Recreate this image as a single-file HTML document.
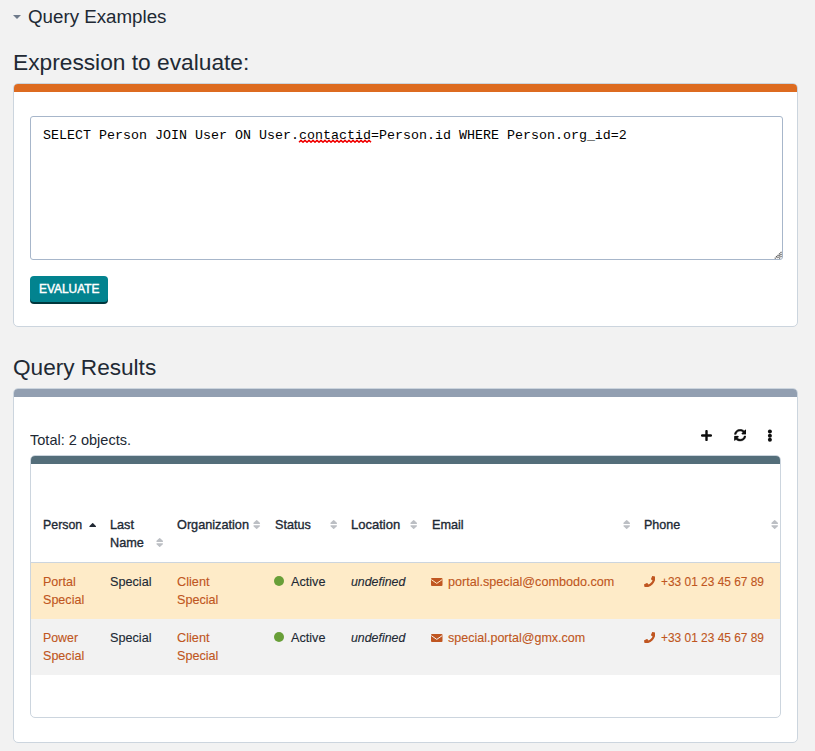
<!DOCTYPE html>
<html lang="en">
<head>
<meta charset="utf-8">
<title>Run Queries</title>
<style>
*{box-sizing:border-box;margin:0;padding:0}
html,body{width:815px;height:751px;overflow:hidden;background:#f2f2f2}
body{position:relative;font-family:"Liberation Sans",sans-serif;color:#212934;font-size:13px;line-height:18px}
.abs{position:absolute;white-space:nowrap}
.t{transform-origin:0 50%}
.caret{left:13px;top:15px;width:0;height:0;border-left:4px solid transparent;border-right:4px solid transparent;border-top:4px solid #6e7a8a}
.qe{font-size:18px;line-height:22px}
.h2{font-size:22.5px;line-height:28px}
.total{font-size:15px;line-height:20px}
.th{font-size:13px;line-height:18px;-webkit-text-stroke:0.35px #212934}
.td{font-size:13px;line-height:18px;-webkit-text-stroke:0.12px}
.it{font-style:italic}
.lnk{color:#c05621}
.panel{position:absolute;left:13px;width:785px;background:#fff;border:1px solid #ccd5de;border-radius:5px;overflow:hidden}
.panel .bar{position:absolute;left:0;right:0;top:0;height:8px}
.ta{position:absolute;left:30px;top:116px;width:753px;height:144px;background:#fff;border:1px solid #a7b6ca;border-radius:3px;font-family:"Liberation Mono",monospace;font-size:13.333px;line-height:15px;padding:11px 12px;color:#000;white-space:pre}
.btn{position:absolute;left:30px;top:276px;width:78px;height:26px;background:#02838f;border-radius:4px;box-shadow:0 2px 0 #00373d}
.bt{color:#fff;font-size:12.3px;line-height:16px;-webkit-text-stroke:0.45px #fff}
.inner{position:absolute;left:30px;top:455px;width:751px;height:263px;background:#fff;border:1px solid #ccd5de;border-radius:5px;overflow:hidden}
.inner .bar{position:absolute;left:0;right:0;top:0;height:8px;background:#546e7a}
.row{position:absolute;left:31px;width:749px}
.sorter{position:absolute;width:7.4px;height:9.2px}
.dot{position:absolute;width:10px;height:10px;border-radius:50%;background:#689f38}
</style>
</head>
<body>
<div class="abs caret"></div>

<div class="panel" style="top:83px;height:244px"><div class="bar" style="background:#dd6b20"></div></div>
<div class="ta">SELECT Person JOIN User ON User.contactid=Person.id WHERE Person.org_id=2</div>
<svg class="abs" style="left:298px;top:138px" width="76" height="7" viewBox="0 0 76 7"><path d="M1 4.3 L3 2.3 L5 4.3 L7 2.3 L9 4.3 L11 2.3 L13 4.3 L15 2.3 L17 4.3 L19 2.3 L21 4.3 L23 2.3 L25 4.3 L27 2.3 L29 4.3 L31 2.3 L33 4.3 L35 2.3 L37 4.3 L39 2.3 L41 4.3 L43 2.3 L45 4.3 L47 2.3 L49 4.3 L51 2.3 L53 4.3 L55 2.3 L57 4.3 L59 2.3 L61 4.3 L63 2.3 L65 4.3 L67 2.3 L69 4.3 L71 2.3 L73 4.3" stroke="#f00000" stroke-width="1.5" stroke-linejoin="round" fill="none"/></svg>
<svg class="abs" style="left:774px;top:251px" width="8" height="8" viewBox="0 0 8 8"><path d="M7.500 0.800L0.800 7.500M7.500 3L3 7.500M7.500 5.200L5.200 7.500" stroke="#505050" stroke-width="1.100" stroke-dasharray="1.400 0.700" fill="none"/></svg>
<div class="btn"></div>

<div class="panel" style="top:388px;height:355px"><div class="bar" style="background:#929fb1"></div></div>

<svg class="abs" style="left:700.9px;top:430px" width="11" height="11" viewBox="0 0 11 11"><path d="M5.5 1.1v8.8M1.1 5.5h8.800" stroke="#0e0e0e" stroke-width="2.400" stroke-linecap="round" fill="none"/></svg>
<svg class="abs" style="left:733.5px;top:429.300px" width="12.300" height="12.300" viewBox="0 0 512 512"><path fill="#0e0e0e" stroke="#0e0e0e" stroke-width="14" d="M370.72 133.28C339.458 104.008 298.888 87.962 255.848 88c-77.458.068-144.328 53.178-162.791 126.85-1.344 5.363-6.122 9.15-11.651 9.15H24.103c-7.498 0-13.194-6.807-11.807-14.176C33.933 94.924 134.813 8 256 8c66.448 0 126.791 26.136 171.315 68.685L463.03 40.97C478.149 25.851 504 36.559 504 57.941V192c0 13.255-10.745 24-24 24H345.941c-21.382 0-32.09-25.851-16.971-40.971l41.75-41.749zM32 296h134.059c21.382 0 32.09 25.851 16.971 40.971l-41.75 41.75c31.262 29.273 71.835 45.319 114.876 45.28 77.418-.07 144.315-53.144 162.787-126.849 1.344-5.363 6.122-9.15 11.651-9.15h57.304c7.498 0 13.194 6.807 11.807 14.176C478.067 417.076 377.187 504 256 504c-66.448 0-126.791-26.136-171.315-68.685L48.97 471.03C33.851 486.149 8 475.441 8 454.059V320c0-13.255 10.745-24 24-24z"/></svg>
<svg class="abs" style="left:767px;top:429px" width="6" height="14" viewBox="0 0 6 14"><circle cx="2.9" cy="2.600" r="2" fill="#0e0e0e"/><circle cx="2.9" cy="6.700" r="2" fill="#0e0e0e"/><circle cx="2.9" cy="10.800" r="2" fill="#0e0e0e"/></svg>

<div class="inner"><div class="bar"></div></div>
<div class="abs" style="left:31px;top:562px;width:749px;height:1px;background:#ccd5de"></div>
<div class="row" style="top:563px;height:56px;background:#feebc8"></div>
<div class="row" style="top:619px;height:56px;background:#f2f2f2"></div>

<svg class="sorter" style="left:88.8px;top:520px" viewBox="0 0 7.4 9.2"><path d="M1 6.4 L3.7 3.8 L6.4 6.4Z" fill="#212934" stroke="#212934" stroke-width="1.3" stroke-linejoin="round"/></svg>
<svg class="sorter" style="left:155.6px;top:538px" viewBox="0 0 7.4 9.2"><path d="M1 3.3 L3.7 0.8 L6.4 3.3Z M1 5.9 L3.7 8.4 L6.4 5.9Z" fill="#bcbfc4" stroke="#bcbfc4" stroke-width="1.3" stroke-linejoin="round"/></svg>
<svg class="sorter" style="left:253.3px;top:520px" viewBox="0 0 7.4 9.2"><path d="M1 3.3 L3.7 0.8 L6.4 3.3Z M1 5.9 L3.7 8.4 L6.4 5.9Z" fill="#bcbfc4" stroke="#bcbfc4" stroke-width="1.3" stroke-linejoin="round"/></svg>
<svg class="sorter" style="left:329.8px;top:520px" viewBox="0 0 7.4 9.2"><path d="M1 3.3 L3.7 0.8 L6.4 3.3Z M1 5.9 L3.7 8.4 L6.4 5.9Z" fill="#bcbfc4" stroke="#bcbfc4" stroke-width="1.3" stroke-linejoin="round"/></svg>
<svg class="sorter" style="left:409.9px;top:520px" viewBox="0 0 7.4 9.2"><path d="M1 3.3 L3.7 0.8 L6.4 3.3Z M1 5.9 L3.7 8.4 L6.4 5.9Z" fill="#bcbfc4" stroke="#bcbfc4" stroke-width="1.3" stroke-linejoin="round"/></svg>
<svg class="sorter" style="left:622.6px;top:520px" viewBox="0 0 7.4 9.2"><path d="M1 3.3 L3.7 0.8 L6.4 3.3Z M1 5.9 L3.7 8.4 L6.4 5.9Z" fill="#bcbfc4" stroke="#bcbfc4" stroke-width="1.3" stroke-linejoin="round"/></svg>
<svg class="sorter" style="left:770.8px;top:520px" viewBox="0 0 7.4 9.2"><path d="M1 3.3 L3.7 0.8 L6.4 3.3Z M1 5.9 L3.7 8.4 L6.4 5.9Z" fill="#bcbfc4" stroke="#bcbfc4" stroke-width="1.3" stroke-linejoin="round"/></svg>

<div class="dot" style="left:274px;top:576px"></div>
<svg class="abs" style="left:431px;top:578px" width="11.5" height="8" viewBox="0 0 11.5 8"><rect x="0" y="0" width="11.5" height="8" rx="1" fill="#c05621"/><path d="M0.3 1.6L5.75 5.4L11.2 1.6" stroke="#feebc8" stroke-width="1" fill="none"/></svg>
<svg class="abs" style="left:643.6px;top:575.9px" width="11.5" height="11.5" viewBox="0 0 512 512"><path fill="#c05621" d="M493.4 24.6l-104-24c-11.3-2.6-22.9 3.3-27.5 13.9l-48 112c-4.2 9.800-1.400 21.300 6.900 28l60.600 49.600c-36 76.700-98.900 140.500-177.200 177.200l-49.600-60.600c-6.800-8.300-18.200-11.100-28-6.900l-112 48C3.900 366.500-2 378.100.6 389.400l24 104C27.100 504.200 36.700 512 48 512c256.100 0 464-207.500 464-464 0-11.200-7.700-20.900-18.600-23.400z"/></svg>

<div class="dot" style="left:274px;top:632px"></div>
<svg class="abs" style="left:431px;top:634px" width="11.5" height="8" viewBox="0 0 11.5 8"><rect x="0" y="0" width="11.5" height="8" rx="1" fill="#c05621"/><path d="M0.3 1.6L5.75 5.4L11.2 1.6" stroke="#f2f2f2" stroke-width="1" fill="none"/></svg>
<svg class="abs" style="left:643.6px;top:631.9px" width="11.5" height="11.5" viewBox="0 0 512 512"><path fill="#c05621" d="M493.4 24.6l-104-24c-11.3-2.6-22.9 3.3-27.5 13.9l-48 112c-4.2 9.800-1.400 21.300 6.900 28l60.600 49.600c-36 76.700-98.900 140.500-177.200 177.200l-49.600-60.600c-6.800-8.300-18.200-11.100-28-6.900l-112 48C3.900 366.500-2 378.100.6 389.400l24 104C27.100 504.200 36.700 512 48 512c256.100 0 464-207.500 464-464 0-11.200-7.700-20.900-18.600-23.400z"/></svg>

<div class="abs t qe" style="left:28px;top:6px;transform:scaleX(1.0409);">Query Examples</div>
<div class="abs t h2" style="left:13px;top:49px;transform:scaleX(1.0103);">Expression to evaluate:</div>
<div class="abs t h2" style="left:13px;top:354px;transform:scaleX(1.0045);">Query Results</div>
<div class="abs t total" style="left:30px;top:430px;transform:scaleX(0.9690);">Total: 2 objects.</div>
<div class="abs t bt" style="left:39px;top:281px;transform:scaleX(0.9676);">EVALUATE</div>
<div class="abs t th" style="left:43px;top:516px;transform:scaleX(0.9514);">Person</div>
<div class="abs t th" style="left:110px;top:516px;transform:scaleX(0.9765);">Last</div>
<div class="abs t th" style="left:110px;top:534px;transform:scaleX(0.9744);">Name</div>
<div class="abs t th" style="left:177px;top:516px;transform:scaleX(0.9767);">Organization</div>
<div class="abs t th" style="left:274.5px;top:516px;transform:scaleX(0.9713);">Status</div>
<div class="abs t th" style="left:351px;top:516px;transform:scaleX(1.0009);">Location</div>
<div class="abs t th" style="left:431.6px;top:516px;transform:scaleX(0.9749);">Email</div>
<div class="abs t th" style="left:644px;top:516px;transform:scaleX(0.9629);">Phone</div>
<div class="abs t td lnk" style="left:43px;top:573px;transform:scaleX(0.9656);">Portal</div>
<div class="abs t td lnk" style="left:43px;top:591px;transform:scaleX(0.9662);">Special</div>
<div class="abs t td" style="left:110px;top:573px;transform:scaleX(0.9733);">Special</div>
<div class="abs t td lnk" style="left:177px;top:573px;transform:scaleX(0.9774);">Client</div>
<div class="abs t td lnk" style="left:177px;top:591px;transform:scaleX(0.9709);">Special</div>
<div class="abs t td" style="left:291px;top:573px;transform:scaleX(0.9744);">Active</div>
<div class="abs t td it" style="left:351px;top:573px;transform:scaleX(0.9505);">undefined</div>
<div class="abs t td lnk" style="left:448px;top:573px;transform:scaleX(0.9699);">portal.special@combodo.com</div>
<div class="abs t td lnk" style="left:661px;top:573px;transform:scaleX(0.9162);">+33 01 23 45 67 89</div>
<div class="abs t td lnk" style="left:43px;top:629px;transform:scaleX(0.9496);">Power</div>
<div class="abs t td lnk" style="left:43px;top:647px;transform:scaleX(0.9662);">Special</div>
<div class="abs t td" style="left:110px;top:629px;transform:scaleX(0.9733);">Special</div>
<div class="abs t td lnk" style="left:177px;top:629px;transform:scaleX(0.9774);">Client</div>
<div class="abs t td lnk" style="left:177px;top:647px;transform:scaleX(0.9709);">Special</div>
<div class="abs t td" style="left:291px;top:629px;transform:scaleX(0.9744);">Active</div>
<div class="abs t td it" style="left:351px;top:629px;transform:scaleX(0.9505);">undefined</div>
<div class="abs t td lnk" style="left:448px;top:629px;transform:scaleX(0.9626);">special.portal@gmx.com</div>
<div class="abs t td lnk" style="left:661px;top:629px;transform:scaleX(0.9162);">+33 01 23 45 67 89</div>
</body>
</html>
